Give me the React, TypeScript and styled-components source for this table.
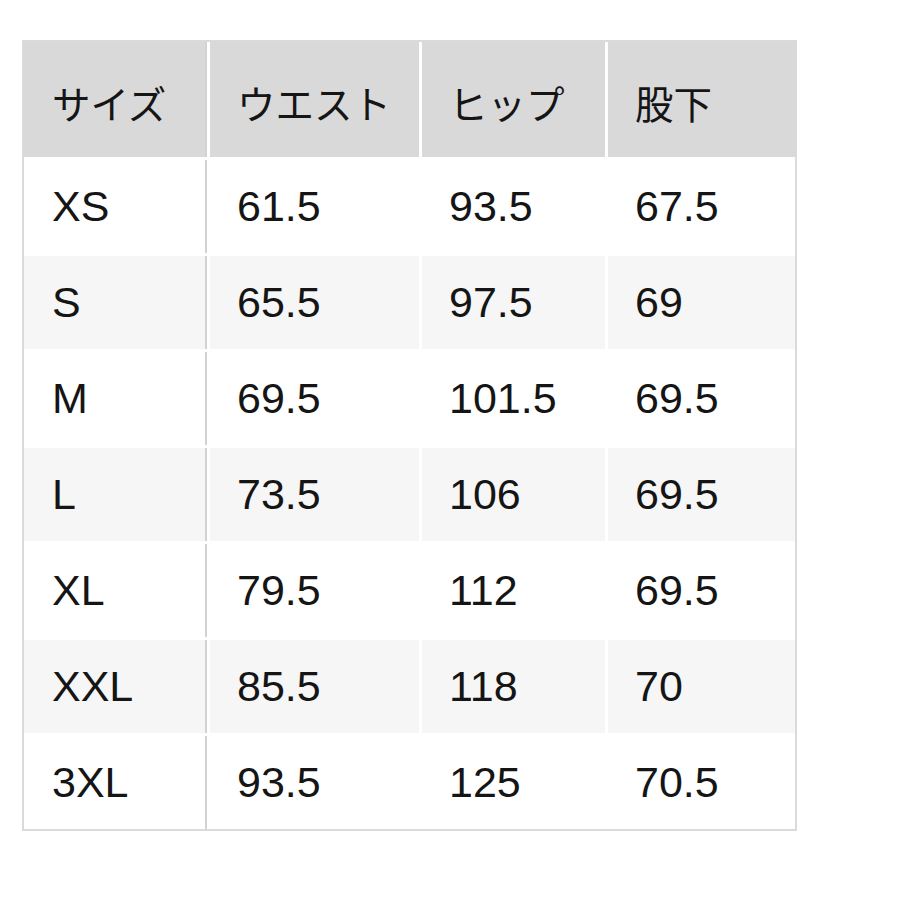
import styled, { createGlobalStyle } from "styled-components";

const GlobalStyle = createGlobalStyle`
  html, body {
    margin: 0;
    padding: 0;
    background: #ffffff;
  }
  body {
    font-family: "Liberation Sans", "Noto Sans CJK JP", sans-serif;
    color: #151515;
  }
`;

const Page = styled.div`
  width: 900px;
  height: 900px;
  padding: 40px 0 0 22px;
  box-sizing: border-box;
`;

const Table = styled.div`
  width: 775px;
  border: 2px solid #dadada;
  box-sizing: border-box;
  display: flex;
  flex-direction: column;
  gap: 3px;
`;

const Row = styled.div<{ $head?: boolean; $shade?: boolean }>`
  display: grid;
  grid-template-columns: 183px 209px 183px 187px;
  column-gap: 3px;
  height: ${(p) => (p.$head ? "115px" : "93px")};
  .cell {
    background: ${(p) => (p.$head ? "#d9d9d9" : p.$shade ? "#f6f6f6" : "#ffffff")};
  }
`;

const Cell = styled.div<{ $head?: boolean }>`
  display: flex;
  align-items: center;
  box-sizing: border-box;
  padding-left: 27px;
  font-family: ${(p) =>
    p.$head
      ? `"Noto Sans CJK JP", sans-serif`
      : `"Liberation Sans", "Noto Sans CJK JP", sans-serif`};
  font-size: ${(p) => (p.$head ? "38.5px" : "43px")};
  padding-top: ${(p) => (p.$head ? "4px" : "0")};
  &:first-child {
    border-right: 2px solid #d2d2d2;
    padding-left: 28px;
  }
`;

const header = ["サイズ", "ウエスト", "ヒップ", "股下"];

const rows = [
  ["XS", "61.5", "93.5", "67.5"],
  ["S", "65.5", "97.5", "69"],
  ["M", "69.5", "101.5", "69.5"],
  ["L", "73.5", "106", "69.5"],
  ["XL", "79.5", "112", "69.5"],
  ["XXL", "85.5", "118", "70"],
  ["3XL", "93.5", "125", "70.5"],
];

const App = () => {
  return (
    <Page>
      <GlobalStyle />
      <Table>
        <Row $head>
          {header.map((h) => (
            <Cell key={h} $head className="cell">
              {h}
            </Cell>
          ))}
        </Row>
        {rows.map((r, i) => (
          <Row key={r[0]} $shade={i % 2 === 1}>
            {r.map((v, j) => (
              <Cell key={j} className="cell">
                {v}
              </Cell>
            ))}
          </Row>
        ))}
      </Table>
    </Page>
  );
};

export default App;
